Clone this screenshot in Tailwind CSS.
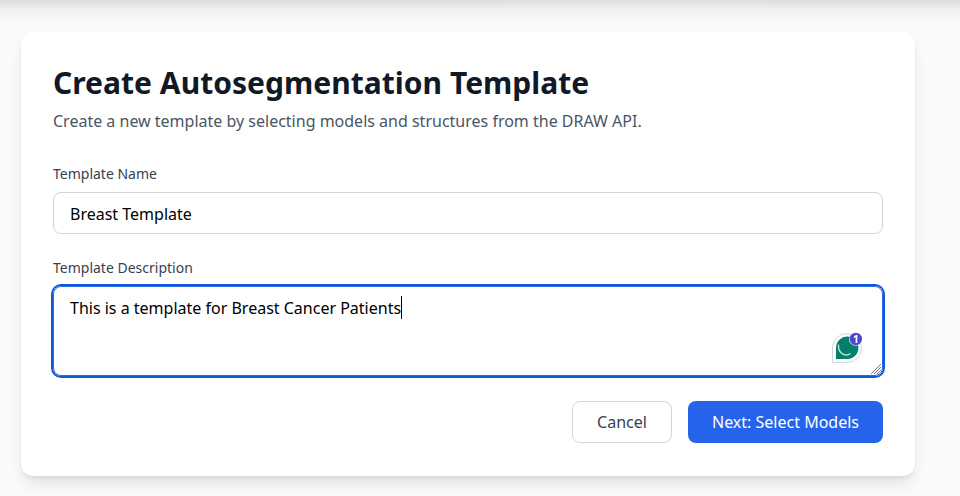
<!DOCTYPE html>
<html lang="en">
<head>
<meta charset="utf-8">
<title>Create Autosegmentation Template</title>
<script src="https://cdn.jsdelivr.net/npm/@tailwindcss/browser@4"></script>
</head>
<body class="h-[496px] overflow-hidden bg-[#f9fafb] font-['Noto_Sans',sans-serif]">
<div class="h-6 bg-linear-to-b from-[#dcdddf] via-[#eff0f2] via-40% to-[#f9fafb]"></div>
<main class="ml-[21px] mt-2 w-[894px] h-[443.5px] rounded-xl bg-white px-8 pt-[33px] shadow-[0_10px_15px_-3px_rgba(0,0,0,0.1),0_4px_6px_-4px_rgba(0,0,0,0.1),0_0_2px_rgba(0,0,0,0.06)]">
  <h1 class="text-3xl font-bold tracking-[0.025px] text-[#111827] whitespace-nowrap">Create Autosegmentation Template</h1>
  <p class="mt-2 text-base text-[#4b5563]">Create a new template by selecting models and structures from the DRAW API.</p>
  <form class="mt-[31px]">
    <label class="block text-sm text-[#374151]">Template Name</label>
    <div class="mt-2 h-[42px] rounded-lg border border-[#d1d5db] px-4 pt-[9px] text-base text-black">Breast Template</div>
    <label class="mt-6 block text-sm text-[#374151]">Template Description</label>
    <div class="relative mt-2 h-[90px] rounded-lg border border-[#2b6ae6] ring-2 ring-[#1158d8] px-4 pt-[9px] text-base text-black">
      <span>This is a template for Breast Cancer Patients</span><span class="absolute left-[347px] top-[9px] h-[23px] w-px bg-black"></span>
      <svg class="absolute right-[19px] top-[44px]" width="32" height="34" viewBox="0 0 32 34" fill="none">
        <path d="M1.5 31.5V16.5a14.5 14.5 0 1 1 14.5 15z" fill="#fff" stroke="#d2d4e0"/>
        <path d="M5 28V16.5A11.2 11.2 0 1 1 16.2 28z" fill="#047e6d"/>
        <path d="M7.6 14.2C6.5 20 12.5 26.5 19 22.8" stroke="#a8dfd3" stroke-width="1.5" stroke-linecap="round"/>
        <circle cx="24.8" cy="8" r="6.8" fill="#fff"/>
        <circle cx="24.8" cy="8" r="6.2" fill="#5146cf"/>
        <text x="24.8" y="11.6" text-anchor="middle" fill="#fff" font-size="10" font-weight="700" font-family="Noto Sans, sans-serif">1</text>
      </svg>
      <svg class="absolute right-0 bottom-0" width="12" height="12" viewBox="0 0 12 12" stroke="#777777">
        <path d="M1 11L11 1M4 11L11 4M7 11L11 7"/>
      </svg>
    </div>
    <div class="mt-[25px] flex justify-end gap-4">
      <button type="button" class="h-[42px] w-[100px] rounded-lg border border-[#d1d5db] text-[#374151]">Cancel</button>
      <button type="button" class="h-[42px] w-[195px] rounded-lg bg-[#2563eb] text-white">Next: Select Models</button>
    </div>
  </form>
</main>
</body>
</html>
